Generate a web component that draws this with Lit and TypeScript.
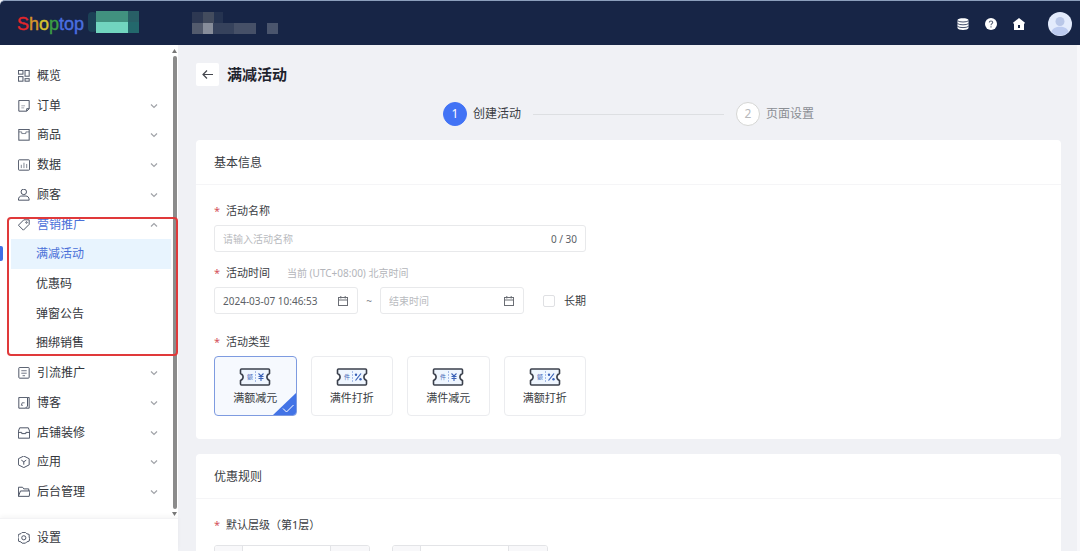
import { LitElement, html, svg, css } from "lit";
import { customElement, state } from "lit/decorators.js";
import { classMap } from "lit/directives/class-map.js";

const icons: Record<string, unknown> = {
  overview: svg`<rect x="1.5" y="1.5" width="5.500" height="4.500"/><rect x="1.5" y="9" width="5.500" height="5.5"/><rect x="9.5" y="1.5" width="5" height="7"/><rect x="9.5" y="11.5" width="5" height="3"/>`,
  order: svg`<path d="M2 1.5h12.500v10l-3 3H2z M14.500 11.500h-3v3"/><path d="M5 10.500h3.500M5 8h4.500" stroke-opacity=".5"/>`,
  goods: svg`<rect x="2" y="1.500" width="12.500" height="13"/><path d="M2 4.500h3.500v2h5v-2h4" stroke-opacity=".7"/>`,
  data: svg`<rect x="1.500" y="2" width="13.500" height="12.500" rx="1"/><path d="M5 8v4M8.200 5.500V12M11.500 7v5" stroke-opacity=".7"/>`,
  customer: svg`<circle cx="8" cy="4.500" r="3.300"/><path d="M1.500 14.500c0-4 2-5 4-5h5c2 0 4 1 4 5z"/>`,
  tag: svg`<path d="M1.500 8.500 8 2h6.500v5.500L7.500 14.500z"/><circle cx="11.300" cy="5.200" r=".9"/>`,
  traffic: svg`<rect x="2" y="1.500" width="12.500" height="13" rx="1"/><path d="M5 5.500h6.500M5 8.500h6.500M6.500 11.500h3" stroke-opacity=".8"/>`,
  blog: svg`<path d="M2 1.500h10.500v10.500L10 14.500H2zM12.500 1.500h2v13H10"/><path d="M5 11l1-3h3M5 11h2" stroke-opacity=".8"/>`,
  shop: svg`<path d="M3 2h10.500l1.500 4v8.500H1.500V6zM1.500 7.500h4V9h5V7.500H15"/>`,
  app: svg`<path d="M8 1l6.500 3.300v7.400L8 15l-6.500-3.300V4.300z"/><path d="M5 6l3 2 3-2M8 8v3.500"/>`,
  admin: svg`<path d="M1.500 13.500V2.500h5l1.500 2h6V7M1.500 13.500 4 7h11.500l-1 6.500z"/>`,
  gear: svg`<path d="M6 1.500h4l1.500 1.500 3 1v3l.500 2-.500 3-3 1-1.500 1.500H6L4.500 13l-3-1V9L1 7.500 1.500 4l3-1z"/><circle cx="8" cy="8" r="2.500"/>`,
};

const icon = (name: string) =>
  html`<svg class="icon" viewBox="1 1 14.500 14.500" aria-hidden="true">${icons[name]}</svg>`;

const chevron = (up = false) =>
  html`<svg class="chevron" viewBox="0 0 8 6" aria-hidden="true">
    <path d=${up ? "M1 4.500 4 1.500 7 4.500" : "M1 1.500 4 4.500 7 1.500"} />
  </svg>`;

const calendar = html`<svg class="calendar" viewBox="0 0 12 12" aria-hidden="true">
  <rect x="1.500" y="2.500" width="9" height="8" />
  <path d="M1.500 5h9M3.800 1v2.500M8.200 1v2.500" />
</svg>`;

const before = [
  ["order", "订单"],
  ["goods", "商品"],
  ["data", "数据"],
  ["customer", "顾客"],
];
const after = [
  ["traffic", "引流推广"],
  ["blog", "博客"],
  ["shop", "店铺装修"],
  ["app", "应用"],
  ["admin", "后台管理"],
];
const promos = ["满减活动", "优惠码", "弹窗公告", "捆绑销售"];
const types = [
  { label: "满额减元", unit: "额", mark: "yuan" },
  { label: "满件打折", unit: "件", mark: "rate" },
  { label: "满件减元", unit: "件", mark: "yuan" },
  { label: "满额打折", unit: "额", mark: "rate" },
];

@customElement("side-menu")
class SideMenu extends LitElement {
  static styles = css`
    :host {
      display: flex;
      flex-direction: column;
      width: 178px;
      flex: none;
      background: #fff;
      color: #33363c;
      font-size: 12px;
      line-height: 20px;
    }
    .scroller { flex: 1; display: flex; min-height: 0; }
    .menu, .sub { list-style: none; margin: 0; padding: 0; display: flex; flex-direction: column; }
    .menu { flex: 1; padding: 16px 0 11px; }
    .item { flex: 1; display: flex; }
    .group { flex: 5; display: flex; flex-direction: column; position: relative; }
    .sub { flex: 4; }
    .link {
      flex: 1;
      display: flex;
      align-items: center;
      gap: 7px;
      padding: 0 13px 0 18px;
      color: inherit;
      text-decoration: none;
    }
    .text { flex: 1; }
    .sub .link { padding-left: 25px; margin-left: 11px; }
    .sub .current { background: #e8f4fe; }
    .current, .open { color: #4a70d8; }
    .marker {
      position: absolute;
      left: 0;
      top: 36px;
      width: 3px;
      height: 15px;
      border-radius: 0 2px 2px 0;
      background: #3f6fe6;
    }
    .frame {
      position: absolute;
      inset: 7px -7px 2px 7px;
      border: 2px solid #e0393a;
      border-radius: 4px;
      pointer-events: none;
    }
    .icon { width: 12px; height: 12px; fill: none; stroke: #4d5566; stroke-width: 1.2; flex: none; }
    .chevron { width: 8px; height: 6px; fill: none; stroke: #a0a3a8; stroke-width: 1.2; }
    .rail { width: 7px; display: flex; flex-direction: column; align-items: center; gap: 3px; padding: 4px 0 2px; box-sizing: border-box; }
    .thumb { flex: 1; width: 4px; border-radius: 2px; background: #8b8b8b; }
    .arrow { width: 5px; height: 4px; fill: #777; }
    .settings {
      display: flex;
      align-items: center;
      gap: 7px;
      padding: 9px 18px 3px;
      border-top: 1px solid #f3f3f5;
      box-shadow: 0 -2px 4px #0000000a;
      color: inherit;
      text-decoration: none;
    }
  `;

  entry([name, label]: string[]) {
    return html`<li class="item">
      <a class="link" href="#">${icon(name)}<span class="text">${label}</span>${chevron()}</a>
    </li>`;
  }

  render() {
    return html`
      <div class="scroller">
        <ul class="menu">
          <li class="item"><a class="link" href="#">${icon("overview")}<span class="text">概览</span></a></li>
          ${before.map((e) => this.entry(e))}
          <li class="group">
            <div class="item">
              <a class="link open" href="#">${icon("tag")}<span class="text">营销推广</span>${chevron(true)}</a>
            </div>
            <ul class="sub">
              ${promos.map(
                (p, i) => html`<li class="item">
                  <a class=${classMap({ link: true, current: i === 0 })} href="#">${p}</a>
                </li>`
              )}
            </ul>
            <span class="marker"></span>
            <span class="frame"></span>
          </li>
          ${after.map((e) => this.entry(e))}
        </ul>
        <div class="rail" aria-hidden="true">
          <svg class="arrow" viewBox="0 0 5 4"><path d="M0 4 2.500 0 5 4z" /></svg>
          <span class="thumb"></span>
          <svg class="arrow" viewBox="0 0 5 4"><path d="M0 0h5L2.500 4z" /></svg>
        </div>
      </div>
      <a class="settings" href="#">${icon("gear")}<span>设置</span></a>
    `;
  }
}

@customElement("top-bar")
class TopBar extends LitElement {
  static styles = css`
    :host {
      display: flex;
      align-items: center;
      box-sizing: border-box;
      height: 45px;
      flex: none;
      padding: 2px 8px 0 17px;
      background: #172546;
      border-top: 1px solid #8c9fbc;
      border-radius: 5px 0 0 0;
    }
    .logo { font: 18px/24px "Liberation Sans", sans-serif; -webkit-text-stroke: 0.4px; display: flex; width: 71px; }
    .s { color: #e3262b; }
    .h { color: #d8962a; }
    .o { color: #d6c22f; }
    .p { color: #3c9d44; }
    .b { color: #4a6fe0; }
    .store { width: 52px; height: 22px; margin-bottom: 4px; }
    .name { width: 87px; height: 29px; margin: 0 0 2px 51px; }
    .tools { margin-left: auto; display: flex; align-items: center; gap: 16px; }
    .tool { display: flex; padding: 0; border: 0; background: none; }
    .glyph { width: 12px; height: 12px; }
    .avatar { width: 24px; height: 24px; margin-left: 7px; }
  `;

  render() {
    return html`
      <div class="logo">
        <span class="s">S</span><span class="h">h</span><span class="o">o</span><span class="p">p</span><span class="b">top</span>
      </div>
      <svg class="store" viewBox="0 0 52 22" aria-hidden="true">
        <rect y="1" width="9" height="20" rx="4" fill="#1b4156" />
        <rect x="8" width="32" height="11" fill="#41917f" />
        <rect x="8" y="11" width="32" height="11" fill="#71d5bf" />
        <rect x="40" width="11" height="11" fill="#285f66" />
        <rect x="40" y="11" width="11" height="11" fill="#23686c" />
      </svg>
      <svg class="name" viewBox="0 0 87 29" aria-hidden="true">
        <rect x="1" y="3" width="11" height="11" fill="#2d3852" />
        <rect x="12" y="3" width="11" height="11" fill="#434c5e" />
        <rect x="23" y="3" width="9" height="11" fill="#253350" />
        <rect x="1" y="14" width="11" height="11" fill="#535b6d" />
        <rect x="12" y="14" width="10" height="11" fill="#878d9a" />
        <rect x="22" y="14" width="21" height="11" fill="#36425c" />
        <rect x="43" y="14" width="22" height="11" fill="#465067" />
        <rect x="76" y="14" width="11" height="11" fill="#4a556d" />
      </svg>
      <div class="tools">
        <button class="tool" aria-label="数据">
          <svg class="glyph" viewBox="0 0 12 12">
            <path fill="#fff" d="M.500 2C.500-.500 11.500-.500 11.500 2v8c0 2.500-11 2.500-11 0z" />
            <path fill="none" stroke="#172546" stroke-width=".8" d="M.500 2.800c2 1.600 9 1.600 11 0M.500 5.600c2 1.600 9 1.600 11 0M.500 8.400c2 1.600 9 1.600 11 0" />
          </svg>
        </button>
        <button class="tool" aria-label="帮助">
          <svg class="glyph" viewBox="0 0 12 12">
            <circle cx="6" cy="6" r="6" fill="#fff" />
            <path fill="none" stroke="#5b6478" stroke-width="1.100" d="M4.300 4.600C4.300 2.400 7.700 2.500 7.700 4.500 7.700 5.700 6 5.700 6 7.200M6 8.200v1.200" />
          </svg>
        </button>
        <button class="tool" aria-label="首页">
          <svg class="glyph" viewBox="0 0 12 12">
            <path fill="#fff" d="M6 0l6 4.800-.6 1H11V12H1V5.800H.600L0 4.800z" />
            <path fill="#172546" d="M5 7h2v3H5z" />
          </svg>
        </button>
        <button class="tool" aria-label="账户">
          <svg class="avatar" viewBox="0 0 24 24">
            <circle cx="12" cy="12" r="12" fill="#e3ebfc" />
            <circle cx="12" cy="9.500" r="4.500" fill="#b9c7e8" />
            <path fill="#bccbf0" d="M3.500 20c1-7 16-7 17 0a12 12 0 0 1-17 0z" />
          </svg>
        </button>
      </div>
    `;
  }
}

@customElement("app-root")
class AppRoot extends LitElement {
  @state() private selected = 0;

  static styles = css`
    :host {
      display: flex;
      flex-direction: column;
      height: 100vh;
      overflow: hidden;
      background: #f0f1f5;
      color: #3a3d43;
      font-family: "Noto Sans", "Noto Sans CJK SC", sans-serif;
      font-size: 12px;
      line-height: 16px;
    }
    .body { flex: 1; display: flex; min-height: 0; }
    .page {
      flex: 1;
      min-width: 0;
      overflow: hidden;
      padding: 17px 16px 0 18px;
      border-right: 3px solid #f8f8fb;
    }
    .heading { display: flex; align-items: center; gap: 8px; height: 24px; }
    .title { margin: 0; font-size: 15px; line-height: 24px; font-weight: 700; color: #1d222c; }
    .back { display: flex; padding: 5px; border: 0; border-radius: 2px; background: #fff; }
    .back-icon { width: 13px; height: 13px; fill: none; stroke: #44474e; stroke-width: 1.2; }
    .steps {
      display: flex;
      align-items: center;
      gap: 12px;
      max-width: 371px;
      margin: 16px auto 14px;
      padding: 0;
      list-style: none;
    }
    .step { display: flex; align-items: center; gap: 6px; }
    .dot {
      box-sizing: border-box;
      width: 24px;
      height: 24px;
      border: 1px solid #d5d6d4;
      border-radius: 50%;
      background: #fff;
      color: #b7b9bc;
      line-height: 22px;
      text-align: center;
    }
    .done .dot { border-color: #4273f5; background: #4273f5; color: #fff; }
    .waiting { color: #8b8e94; }
    .line { flex: 1; height: 1px; background: #dddfe2; }
    .card { margin-bottom: 15px; border-radius: 4px; background: #fff; }
    .card-title {
      margin: 0;
      padding: 15px 18px 13px;
      border-bottom: 1px solid #f5f5f7;
      font-size: 12px;
      line-height: 16px;
      font-weight: 400;
    }
    .form { padding: 18px 18px 23px; }
    .field { max-width: 372px; margin: 0 0 13px; padding: 0; border: 0; min-width: 0; }
    .spaced { margin-bottom: 20px; }
    .last { margin-bottom: 0; }
    .label { display: flex; padding: 0; margin-bottom: 6px; font-size: 11px; }
    .roomy { margin-bottom: 12px; }
    .star { width: 12px; color: #d4535c; }
    .note { margin-left: 17px; font-size: 10px; color: #b3b5ba; }
    .box {
      display: flex;
      align-items: center;
      box-sizing: border-box;
      height: 27px;
      padding: 0 8px;
      border: 1px solid #e8e9eb;
      border-radius: 3px;
      font-size: 10px;
      color: #5c5f66;
    }
    .input { flex: 1; min-width: 0; width: 0; padding: 0; border: 0; outline: 0; background: none; font: inherit; color: inherit; }
    .input::placeholder { color: #b9bbc0; }
    .dates { display: flex; align-items: center; }
    .dates .box { flex: 1; }
    .tilde { width: 22px; text-align: center; font-size: 10px; color: #85888e; }
    .calendar { width: 12px; height: 12px; fill: none; stroke: #6b6e75; }
    .long { display: flex; align-items: center; gap: 9px; margin-left: 19px; font-size: 11px; }
    .check { appearance: none; width: 12px; height: 12px; margin: 0; border: 1px solid #dfe0e3; border-radius: 2px; background: #fff; }
    .check:checked { background: #4273f5; }
    .types { display: grid; grid-template-columns: repeat(4, 1fr); gap: 14px; }
    .type {
      position: relative;
      display: flex;
      flex-direction: column;
      align-items: center;
      gap: 3px;
      box-sizing: border-box;
      height: 60px;
      padding-top: 10px;
      border: 1px solid #ebecef;
      border-radius: 4px;
      font-size: 11px;
      overflow: hidden;
    }
    .chosen { border-color: #7e9be0; background: #f6f9fe; }
    .radio { position: absolute; opacity: 0; margin: 0; }
    .ticket { width: 32px; height: 20px; }
    .unit { font: 6px "Noto Sans CJK SC", sans-serif; fill: #4467b8; }
    .tick { position: absolute; right: 0; bottom: 0; width: 23px; height: 22px; }
    .rules { display: flex; gap: 22px; }
    .rule { display: flex; box-sizing: border-box; width: 156px; height: 28px; border: 1px solid #e3e4e7; border-radius: 3px; overflow: hidden; }
    .addon { width: 27px; background: #f8f8fa; border-right: 1px solid #e3e4e7; }
    .suffix { width: 38px; border-right: 0; border-left: 1px solid #e3e4e7; }
  `;

  ticket(unit: string, mark: string) {
    return html`<svg class="ticket" viewBox="0 0 32 20" aria-hidden="true">
      <path
        fill="#eff6ff"
        stroke="#3b404c"
        stroke-width="1.600"
        stroke-linejoin="round"
        d="M2.500 2h27q1 0 1 1v3.500c-3.500 1.500-3.500 5.500 0 7V17q0 1-1 1h-27q-1 0-1-1v-3.500c3.500-1.500 3.500-5.500 0-7V3q0-1 1-1z"
      />
      <path stroke="#a5bbe8" stroke-dasharray="2 1" d="M16.500 4v12" />
      <text class="unit" x="8" y="12">${unit}</text>
      ${mark === "yuan"
        ? svg`<path fill="none" stroke="#3a62b8" stroke-width="1.100" d="M19.500 6.500l2.500 2.500 2.500-2.500M22 9v5M19.500 9.500h5M19.500 11.500h5"/>`
        : svg`<path fill="none" stroke="#3a62b8" stroke-width="1.200" d="M25 6.500l-5.500 7"/><circle cx="20" cy="7.800" r="1.200" fill="#3a62b8"/><circle cx="24.500" cy="12.300" r="1.200" fill="#3a62b8"/>`}
    </svg>`;
  }

  render() {
    return html`
      <top-bar></top-bar>
      <div class="body">
        <side-menu></side-menu>
        <main class="page">
          <div class="heading">
            <button class="back" aria-label="返回">
              <svg class="back-icon" viewBox="0 0 13 13"><path d="M12 6.500H2M6 2.500 2 6.500 6 10.500" /></svg>
            </button>
            <h1 class="title">满减活动</h1>
          </div>
          <ol class="steps">
            <li class="step done"><span class="dot">1</span>创建活动</li>
            <li class="line" aria-hidden="true"></li>
            <li class="step waiting"><span class="dot">2</span>页面设置</li>
          </ol>

          <section class="card">
            <h2 class="card-title">基本信息</h2>
            <div class="form">
              <div class="field">
                <label class="label" for="name"><span class="star">*</span>活动名称</label>
                <div class="box">
                  <input class="input" id="name" maxlength="30" placeholder="请输入活动名称" />
                  <span>0 / 30</span>
                </div>
              </div>
              <div class="field spaced">
                <label class="label" for="start">
                  <span class="star">*</span>活动时间<span class="note">当前 (UTC+08:00) 北京时间</span>
                </label>
                <div class="dates">
                  <div class="box"><input class="input" id="start" .value=${"2024-03-07 10:46:53"} />${calendar}</div>
                  <span class="tilde">~</span>
                  <div class="box"><input class="input" aria-label="结束时间" placeholder="结束时间" />${calendar}</div>
                  <label class="long"><input class="check" type="checkbox" />长期</label>
                </div>
              </div>
              <fieldset class="field last">
                <legend class="label"><span class="star">*</span>活动类型</legend>
                <div class="types">
                  ${types.map(
                    (t, i) => html`<label class=${classMap({ type: true, chosen: i === this.selected })}>
                      <input
                        class="radio"
                        type="radio"
                        name="type"
                        .checked=${i === this.selected}
                        @change=${() => (this.selected = i)}
                      />
                      ${this.ticket(t.unit, t.mark)}
                      <span>${t.label}</span>
                      ${i === this.selected
                        ? html`<svg class="tick" viewBox="0 0 23 22" aria-hidden="true">
                            <path fill="#4273e6" d="M23 0v22H0z" />
                            <path fill="none" stroke="#fff" d="M10 15.500l3.500 3.500 7-7" />
                          </svg>`
                        : ""}
                    </label>`
                  )}
                </div>
              </fieldset>
            </div>
          </section>

          <section class="card">
            <h2 class="card-title">优惠规则</h2>
            <div class="form">
              <label class="label roomy" for="amount"><span class="star">*</span>默认层级（第1层）</label>
              <div class="rules">
                <div class="rule"><span class="addon"></span><input class="input" id="amount" /><span class="addon suffix"></span></div>
                <div class="rule"><span class="addon"></span><input class="input" aria-label="优惠" /><span class="addon suffix"></span></div>
              </div>
            </div>
          </section>
        </main>
      </div>
    `;
  }
}
